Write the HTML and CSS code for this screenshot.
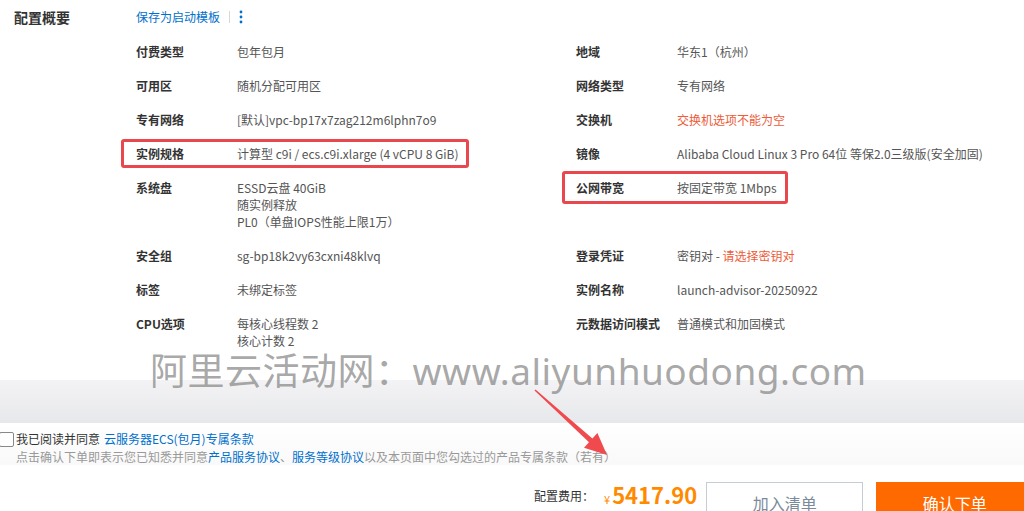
FILE: index.html
```html
<!DOCTYPE html>
<html lang="zh-CN">
<head>
    <meta charset="UTF-8">
    <meta name="viewport" content="width=device-width, initial-scale=1.0">
    <title>配置概要</title>
    <link rel="stylesheet" href="styles.css">
</head>
<body>
    <div class="page">
        <section class="summary">
            <div class="summary-title">配置概要</div>
            <div class="summary-body">
                <div class="summary-actions">
                    <a class="link">保存为启动模板</a>
                    <span class="divider"></span>
                    <svg class="more" viewBox="0 0 4 14" width="4" height="14">
                        <circle cx="2" cy="2" r="1.4"/>
                        <circle cx="2" cy="7" r="1.4"/>
                        <circle cx="2" cy="12" r="1.4"/>
                    </svg>
                </div>
                <div class="spec-grid">
                    <div class="label">付费类型</div>
                    <div class="value">包年包月</div>
                    <div class="label">地域</div>
                    <div class="value">华东1（杭州）</div>

                    <div class="label">可用区</div>
                    <div class="value">随机分配可用区</div>
                    <div class="label">网络类型</div>
                    <div class="value">专有网络</div>

                    <div class="label">专有网络</div>
                    <div class="value">[默认]vpc-bp17x7zag212m6lphn7o9</div>
                    <div class="label">交换机</div>
                    <div class="value error">交换机选项不能为空</div>

                    <div class="label">实例规格</div>
                    <div class="value">计算型 c9i / ecs.c9i.xlarge (4 vCPU 8 GiB)</div>
                    <div class="label">镜像</div>
                    <div class="value">Alibaba Cloud Linux 3 Pro 64位 等保2.0三级版(安全加固)</div>

                    <div class="label">系统盘</div>
                    <div class="value">ESSD云盘 40GiB<br>随实例释放<br>PL0（单盘IOPS性能上限1万）</div>
                    <div class="label">公网带宽</div>
                    <div class="value">按固定带宽 1Mbps</div>

                    <div class="label">安全组</div>
                    <div class="value">sg-bp18k2vy63cxni48klvq</div>
                    <div class="label">登录凭证</div>
                    <div class="value">密钥对 - <span class="error">请选择密钥对</span></div>

                    <div class="label">标签</div>
                    <div class="value">未绑定标签</div>
                    <div class="label">实例名称</div>
                    <div class="value">launch-advisor-20250922</div>

                    <div class="label">CPU选项</div>
                    <div class="value">每核心线程数 2<br>核心计数 2</div>
                    <div class="label">元数据访问模式</div>
                    <div class="value">普通模式和加固模式</div>
                </div>
            </div>
        </section>

        <footer class="footer">
            <div class="shade"></div>
            <div class="agree">
                <label class="agree-line">
                    <span class="checkbox"></span>
                    我已阅读并同意 <a class="link">云服务器ECS(包月)专属条款</a>
                </label>
                <p class="agree-note">点击确认下单即表示您已知悉并同意<a class="link">产品服务协议</a>、<a class="link">服务等级协议</a>以及本页面中您勾选过的产品专属条款（若有）</p>
            </div>
            <div class="order-bar">
                <span class="fee-label">配置费用：</span>
                <span class="fee"><span class="currency">¥</span>5417.90</span>
                <button class="btn btn-cart">加入清单</button>
                <button class="btn btn-buy">确认下单</button>
            </div>
        </footer>

        <!-- annotations drawn over the screenshot -->
        <div class="mark mark-spec"></div>
        <div class="mark mark-bandwidth"></div>
        <div class="watermark">阿里云活动网：www.aliyunhuodong.com</div>
        <svg class="arrow" viewBox="0 0 85 75" width="85" height="75">
            <polygon points="5.5,4.5 62.4,53.4 67.4,47.9 77,70 54,62.7 59,57.2 4.5,5.5"/>
        </svg>
    </div>
</body>
</html>
```

FILE: styles.css
```css
body {
    margin: 0;
    background: #ffffff;
    font-family: "Noto Sans CJK SC", "Liberation Sans", sans-serif;
    font-size: 12px;
    color: #555;
    overflow: hidden;
}
.page {
    position: relative;
    width: 1024px;
    height: 511px;
    overflow: hidden;
}
.link {
    color: #0070cc;
    text-decoration: none;
}
.error {
    color: #ed5b38;
}
.summary {
    display: flex;
    padding: 7px 0 0 14px;
    height: 380px;
    box-sizing: border-box;
}
.summary-title {
    width: 122px;
    font-size: 14px;
    line-height: 20px;
    font-weight: bold;
    color: #333;
}
.summary-body {
    flex: 1;
}
.summary-actions {
    display: flex;
    align-items: center;
    height: 20px;
    line-height: 20px;
}
.divider {
    width: 1px;
    height: 12px;
    background: #d8d8d8;
    margin: 0 9px 0 9px;
}
.more {
    fill: #0070cc;
}
.spec-grid {
    display: grid;
    grid-template-columns: 101px 339px 101px 1fr;
    row-gap: 17px;
    margin-top: 15.5px;
    line-height: 17px;
}
.label {
    font-weight: bold;
    color: #333;
}
.footer {
    display: flex;
    flex-direction: column;
}
.shade {
    height: 43px;
    background: linear-gradient(#f3f3f5, #e7e8eb);
}
.agree {
    height: 42px;
    padding: 7px 0 0 0;
    box-sizing: border-box;
    background: linear-gradient(#ffffff, #f9f9f9);
}
.agree-line {
    display: flex;
    align-items: center;
    line-height: 18px;
    color: #333;
}
.agree-line .link {
    margin-left: 4px;
}
.checkbox {
    width: 13px;
    height: 13px;
    margin-left: -1px;
    margin-right: 2px;
    border: 1px solid #888;
    border-radius: 2px;
    background: #fff;
}
.agree-note {
    margin: 0 0 0 16px;
    line-height: 17px;
    color: #999;
}
.order-bar {
    display: flex;
    align-items: flex-start;
    padding: 17px 0 0 534px;
    height: 46px;
    box-sizing: border-box;
    white-space: nowrap;
}
.order-bar > * {
    flex-shrink: 0;
}
.fee-label {
    margin-top: 5px;
    color: #333;
}
.fee {
    margin-left: 10px;
    margin-top: -4px;
    font-size: 22px;
    font-weight: bold;
    color: #ff8a00;
}
.currency {
    font-size: 11px;
    font-weight: normal;
    margin-right: 2px;
}
.btn {
    width: 157px;
    height: 40px;
    font-family: inherit;
    font-size: 16px;
    border-radius: 0;
    padding: 1px 0 0 0;
}
.btn-cart {
    margin-left: 9px;
    border: 1px solid #c5ccd3;
    background: #fff;
    color: #7b8a9a;
}
.btn-buy {
    margin-left: 13px;
    border: none;
    background: #ff6a00;
    color: #fff;
}
.mark {
    position: absolute;
    border: 3px solid #e8474d;
    border-radius: 3px;
    box-sizing: border-box;
}
.mark-spec {
    left: 121px;
    top: 139px;
    width: 348px;
    height: 29px;
}
.mark-bandwidth {
    left: 562px;
    top: 171px;
    width: 226px;
    height: 33px;
}
.watermark {
    position: absolute;
    left: 150px;
    top: 349px;
    font-family: "Noto Sans", "Noto Sans CJK SC", sans-serif;
    font-size: 37px;
    line-height: 44px;
    letter-spacing: 0.5px;
    color: rgba(130, 130, 130, 0.7);
    white-space: nowrap;
}
.arrow {
    position: absolute;
    left: 530px;
    top: 385px;
    fill: #f04a4f;
}
```
